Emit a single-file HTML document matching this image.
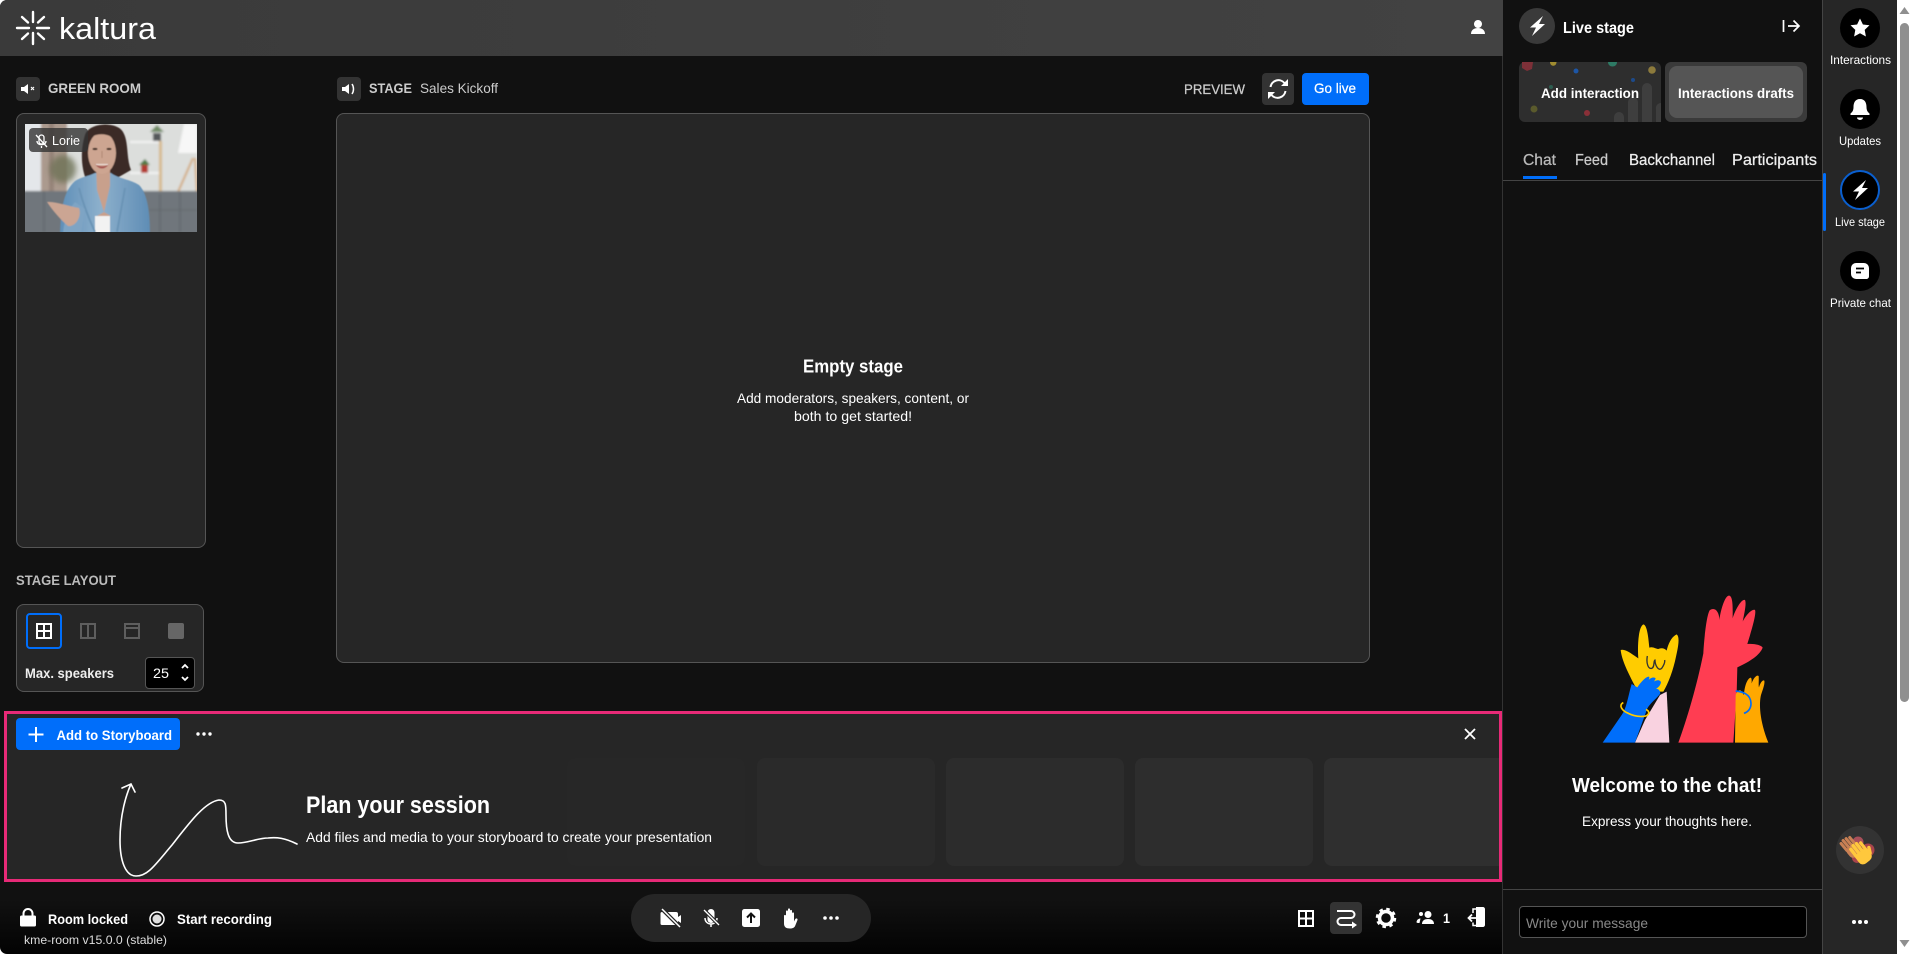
<!DOCTYPE html>
<html><head><meta charset="utf-8"><title>Kaltura room</title>
<style>
html,body{margin:0;padding:0;width:1912px;height:954px;overflow:hidden;background:#fff}
div{position:absolute;box-sizing:border-box}
svg{position:absolute;left:0;top:0}
text{font-family:"Liberation Sans",sans-serif;fill:#fff;font-size:14px}
.b{font-weight:700}
.m{stroke:currentColor;stroke-width:.25px}
</style></head><body>
<div style="left:0;top:0;width:1503px;height:954px;background:linear-gradient(#111 0,#111 900px,#030303 954px);border-radius:7px 0 0 7px"></div>
<div style="left:0;top:0;width:1503px;height:56px;background:linear-gradient(90deg,#3a3a3a,#424242);border-radius:7px 0 0 0"></div>
<div style="left:1502px;top:56px;width:1px;height:898px;background:#333"></div>
<div style="left:1503px;top:0;width:319px;height:954px;background:#111"></div>
<div style="left:1822px;top:0;width:75px;height:954px;background:#262626;border-left:1px solid #444"></div>
<div style="left:1897px;top:0;width:15px;height:954px;background:#fff"></div>
<div style="left:1900px;top:23px;width:9px;height:679px;background:#8f8f8f;border-radius:5px"></div>

<div style="left:16px;top:113px;width:190px;height:435px;background:#262626;border:1px solid #555;border-radius:8px"></div>
<div style="left:336px;top:113px;width:1034px;height:550px;background:#262626;border:1px solid #555;border-radius:8px"></div>
<div style="left:16px;top:77px;width:24px;height:24px;background:#333;border-radius:4px"></div>
<div style="left:337px;top:77px;width:24px;height:24px;background:#333;border-radius:4px"></div>
<div style="left:1262px;top:73px;width:32px;height:32px;background:#333;border-radius:4px"></div>
<div style="left:1302px;top:73px;width:67px;height:32px;background:#006efa;border-radius:4px"></div>

<div style="left:16px;top:604px;width:188px;height:88px;background:#262626;border:1px solid #555;border-radius:8px"></div>
<div style="left:26px;top:613px;width:36px;height:36px;border:2px solid #006efa;border-radius:4px"></div>
<div style="left:145px;top:657px;width:50px;height:32px;background:#000;border:1px solid #555;border-radius:4px"></div>

<div style="left:4px;top:711px;width:1498px;height:171px;background:#262626;border:3px solid #e72a77"></div>
<div style="left:567px;top:758px;width:178px;height:108px;border-radius:8px;background:#272727"></div>
<div style="left:757px;top:758px;width:178px;height:108px;border-radius:8px;background:#2a2a2a"></div>
<div style="left:946px;top:758px;width:178px;height:108px;border-radius:8px;background:#2c2c2c"></div>
<div style="left:1135px;top:758px;width:178px;height:108px;border-radius:8px;background:#2d2d2d"></div>
<div style="left:1324px;top:758px;width:175px;height:108px;border-radius:8px 0 0 8px;background:#2f2f2f"></div>
<div style="left:16px;top:718px;width:164px;height:32px;background:#006efa;border-radius:4px"></div>

<div style="left:631px;top:894px;width:240px;height:48px;background:#262626;border-radius:24px"></div>
<div style="left:1330px;top:902px;width:32px;height:32px;background:#333;border-radius:4px"></div>

<div style="left:1519px;top:62px;width:142px;height:60px;background:#2e2e2e;border-radius:6px"></div>
<div style="left:1665px;top:62px;width:142px;height:60px;background:#3a3a3a;border-radius:6px"></div>
<div style="left:1669px;top:66px;width:134px;height:52px;background:#555;border-radius:8px"></div>
<div style="left:1503px;top:180px;width:319px;height:1px;background:#444"></div>
<div style="left:1523px;top:176px;width:34px;height:3px;background:#006efa"></div>
<div style="left:1503px;top:889px;width:319px;height:1px;background:#444"></div>
<div style="left:1519px;top:906px;width:288px;height:32px;background:#000;border:1px solid #555;border-radius:4px"></div>
<div style="left:1823px;top:173px;width:3px;height:58px;background:#006efa;border-radius:2px"></div>

<!-- video tile -->
<svg style="left:25px;top:124px" width="172" height="108" viewBox="0 0 172 108">
<defs>
<filter id="bl" x="-5%" y="-5%" width="110%" height="110%"><feGaussianBlur stdDeviation="1"/></filter>
<filter id="bl3" x="-30%" y="-30%" width="160%" height="160%"><feGaussianBlur stdDeviation="3"/></filter>
<filter id="bl05"><feGaussianBlur stdDeviation=".5"/></filter>
<clipPath id="vc"><rect width="172" height="108"/></clipPath>
<linearGradient id="sh" x1="0" x2="1" y1="0" y2="0"><stop offset="0" stop-color="#5f8fb8"/><stop offset=".45" stop-color="#8db0cc"/><stop offset="1" stop-color="#5f8db5"/></linearGradient>
</defs>
<g clip-path="url(#vc)">
<g filter="url(#bl)">
<rect x="-4" y="-4" width="180" height="116" fill="#dcdedc"/>
<rect x="-4" y="-4" width="20" height="74" fill="#e4e7ea"/>
<rect x="16" y="-4" width="26" height="76" fill="#ab9a8e"/>
<rect x="24" y="-4" width="5" height="76" fill="#97857a"/>
<rect x="105" y="17" width="32" height="2" fill="#f4f4f4"/><rect x="105" y="48" width="32" height="2" fill="#f4f4f4"/>
<rect x="134" y="17" width="3" height="52" fill="#d7b98c"/>
<rect x="128" y="9" width="8" height="8" fill="#55585a"/><path d="M125 8L132 1L139 8Z" fill="#6f8a65"/>
<rect x="116" y="41" width="7" height="8" fill="#b33b30"/><path d="M114 41L120 35L125 41Z" fill="#4f7a45"/>
<path d="M159 0H172V29H153Z" fill="#f7f7f7"/>
<path d="M168 34L153 68M170 34L172 68" stroke="#d3a878" stroke-width="2" fill="none"/>
<rect x="-4" y="67" width="180" height="45" fill="#70767c"/>
<path d="M19 67V108M135 70V108M155 68V108" stroke="#62676c" stroke-width="1.500"/>
<path d="M124 86H172" stroke="#62676c" stroke-width="1"/>
</g>
<ellipse cx="38" cy="45" rx="13" ry="14" fill="#6d7154" filter="url(#bl3)" opacity=".8"/>
<g filter="url(#bl05)">
<path d="M60 11C64-2 92-3 98 8C104 18 101 34 106 46L92 54L62 58C55 42 56 24 60 11Z" fill="#3b2a25"/>
<path d="M35 110C36 85 38 68 50 57C56 53 64 52 70 49L86 49C92 54 104 55 114 61C123 70 125 90 125 110Z" fill="url(#sh)"/>
<path d="M71 42H85V62L79 88L72 66Z" fill="#c8a08c"/>
<path d="M70 92H85V110H70Z" fill="#f2f2f2"/>
<path d="M79 88L72 92H86Z" fill="#c8a08c"/>
<ellipse cx="77" cy="29" rx="14" ry="21" fill="#cda591"/>
<path d="M64 15C70 8 88 8 92 20C94 12 90 4 78 4C68 4 63 9 64 15Z" fill="#3b2a25"/>
<ellipse cx="70" cy="25" rx="2.500" ry="1.100" fill="#3d2a24"/><ellipse cx="84" cy="25" rx="2.500" ry="1.100" fill="#3d2a24"/>
<path d="M70 40C74 43 80 43 84 40C80 46 74 46 70 40Z" fill="#a55350"/>
<path d="M71 40.500h12" stroke="#efe3de" stroke-width="1"/>
<path d="M77 27v7" stroke="#b08672" stroke-width="1"/>
<path d="M54 64C58 80 64 95 70 108M100 64L92 108" stroke="#6b94b6" stroke-width="2" fill="none"/>
<path d="M38 110C39 95 44 85 50 78L60 85L56 110Z" fill="#7ea4c4"/>
<path d="M22 78C30 77 42 82 54 84C57 92 51 103 43 102C35 95 28 87 22 78Z" fill="#cba593"/>
</g>
</g>
<rect x="4" y="4" width="59" height="24" rx="4" fill="#333" fill-opacity=".8"/>
</svg>

<svg width="1912" height="954" viewBox="0 0 1912 954" xmlns="http://www.w3.org/2000/svg">
<!-- logo -->
<g stroke="#fff" stroke-width="2.400" stroke-linecap="round" fill="none">
<path d="M33 12V22M33 33V44M17 28H29M37 28H49M22 17L28 22.500M44 17L38 22.500M22 39L28 33.500M44 39L38 33.500"/>
</g>
<text x="59" y="39" textLength="97" lengthAdjust="spacingAndGlyphs" style="font-size:31px">kaltura</text>
<!-- user -->
<path d="M1478 20a4 4 0 1 1-.01 0ZM1471 34c0-4 3-6 7-6s7 2 7 6Z" fill="#fff"/>

<!-- speakers -->
<path d="M21 87h3l4-3v10l-4-3h-3Z" fill="#fff"/><path d="M31 87l3 3M34 87l-3 3" stroke="#fff" stroke-width="1.200"/>
<path d="M342 87h3l4-3v10l-4-3h-3Z" fill="#fff"/><path d="M352 84c2 3 2 7 0 10" stroke="#fff" stroke-width="1.500" fill="none"/>
<text class="b" x="48" y="93" textLength="93" lengthAdjust="spacingAndGlyphs" style="fill:#ccc">GREEN ROOM</text>
<text class="b" x="369" y="93" textLength="43" lengthAdjust="spacingAndGlyphs" style="fill:#ccc">STAGE</text>
<text x="420" y="93" textLength="78" lengthAdjust="spacingAndGlyphs" style="fill:#ccc">Sales Kickoff</text>

<!-- lorie label -->
<g stroke="#fff" stroke-width="1.300" fill="none"><rect x="39" y="135" width="5" height="9" rx="2.500"/><path d="M37 141c0 5 9 5 9 0M41.500 146v2M36 135l11 12"/></g>
<text x="52" y="145" textLength="28" lengthAdjust="spacingAndGlyphs" style="font-size:13px">Lorie</text>

<text class="m" x="1184" y="94" textLength="61" lengthAdjust="spacingAndGlyphs" style="fill:#ccc;color:#ccc">PREVIEW</text>
<g stroke="#fff" stroke-width="2" fill="none"><path d="M1270.500 87a8 8 0 0 1 14-4"/><path d="M1285.500 91a8 8 0 0 1-14 4"/></g>
<path d="M1288 79v7h-7ZM1268 99v-7h7Z" fill="#fff"/>
<text class="m" x="1314" y="93" textLength="42" lengthAdjust="spacingAndGlyphs" style="color:#fff">Go live</text>

<text class="b" x="803" y="372.500" textLength="100" lengthAdjust="spacingAndGlyphs" style="font-size:18px">Empty stage</text>
<text x="737" y="403" textLength="232" lengthAdjust="spacingAndGlyphs">Add moderators, speakers, content, or</text>
<text x="794" y="421" textLength="118" lengthAdjust="spacingAndGlyphs">both to get started!</text>

<text class="b" x="16" y="585" textLength="100" lengthAdjust="spacingAndGlyphs" style="fill:#bbb">STAGE LAYOUT</text>
<!-- layouts -->
<g fill="none" stroke-width="2">
<path d="M37 624h14v14h-14ZM44 624v14M37 631h14" stroke="#fff"/>
<path d="M81 624h14v14h-14ZM88 624v14" stroke="#5e5e5e"/>
<path d="M125 624h14v14h-14ZM125 628h14" stroke="#5e5e5e"/>
</g>
<rect x="168" y="623" width="16" height="16" rx="2" fill="#666"/>
<text class="b" x="25" y="678" textLength="89" lengthAdjust="spacingAndGlyphs" style="fill:#eee">Max. speakers</text>
<text x="153" y="678" textLength="16" lengthAdjust="spacingAndGlyphs">25</text>
<path d="M182 668l3-3 3 3M182 677l3 3 3-3" stroke="#fff" stroke-width="1.800" fill="none"/>

<!-- storyboard -->
<path d="M36 727v15M28.500 734.500h15" stroke="#fff" stroke-width="2" fill="none"/>
<text class="b" x="56.500" y="740" textLength="115.500" lengthAdjust="spacingAndGlyphs">Add to Storyboard</text>
<g fill="#fff"><circle cx="198" cy="734" r="1.700"/><circle cx="204" cy="734" r="1.700"/><circle cx="210" cy="734" r="1.700"/></g>
<path d="M1465 729l10 10M1475 729l-10 10" stroke="#fff" stroke-width="1.800" fill="none"/>
<path d="M297 844C285 838 277 837 268 838C258 838 248 843 238 843C228 843 226 830 226 815C226 805 226 800 219 800C205 802 190 822 172 845C155 865 148 876 136 876C125 876 120 860 120 840C120 815 126 795 131 784M122 788L131 784L135 792" stroke="#fff" stroke-width="1.600" fill="none" stroke-linecap="round"/>
<text class="b" x="306" y="813" textLength="184" lengthAdjust="spacingAndGlyphs" style="font-size:24px">Plan your session</text>
<text x="306" y="842" textLength="406" lengthAdjust="spacingAndGlyphs">Add files and media to your storyboard to create your presentation</text>

<!-- bottom left -->
<path d="M20 917a1.500 1.500 0 0 1 1.500-1.500h13a1.500 1.500 0 0 1 1.500 1.500v8a1.500 1.500 0 0 1-1.500 1.500h-13a1.500 1.500 0 0 1-1.500-1.500Z" fill="#fff"/>
<path d="M23.500 916v-2.500a4.500 4.500 0 0 1 9 0V916" stroke="#fff" stroke-width="2" fill="none"/>
<text class="b" x="48" y="924" textLength="80" lengthAdjust="spacingAndGlyphs">Room locked</text>
<circle cx="157" cy="919" r="7" stroke="#fff" stroke-width="1.500" fill="none"/><circle cx="157" cy="919" r="4.500" fill="#ddd"/>
<text class="b" x="177" y="924" textLength="95" lengthAdjust="spacingAndGlyphs">Start recording</text>
<text x="24" y="944" textLength="143" lengthAdjust="spacingAndGlyphs" style="font-size:12px;fill:#ddd">kme-room v15.0.0 (stable)</text>

<!-- control pill -->
<path d="M662 912h14a2 2 0 0 1 2 2v9a2 2 0 0 1-2 2h-14a1.500 1.500 0 0 1-1.500-1.500v-10a1.500 1.500 0 0 1 1.500-1.500ZM678 917l3-2v8l-3-2Z" fill="#fff"/>
<path d="M662 909l18 18" stroke="#262626" stroke-width="4"/><path d="M662 909l18 18" stroke="#fff" stroke-width="1.500"/>
<rect x="707.500" y="909" width="7" height="14" rx="3.500" fill="#fff"/>
<path d="M705 918c0 8 12 8 12 0M711 924v3" stroke="#fff" stroke-width="1.500" fill="none"/>
<path d="M704 910l15 15" stroke="#262626" stroke-width="3.500"/><path d="M704 910l15 15" stroke="#fff" stroke-width="1.300"/>
<rect x="742" y="909" width="18" height="18" rx="2.500" fill="#fff"/>
<path d="M751 923v-9M747 917.500l4-4 4 4" stroke="#111" stroke-width="2" fill="none"/>
<path d="M784 916c0-1.500 2-1.500 2 0v-4.500c0-1.500 2-1.500 2 0v-2c0-1.500 2-1.500 2 0v1.500c0-1.500 2-1.500 2 0v2.500c0-1.500 2-1.500 2 0v8l1-2c1-2 3-1 2.500.5l-2 5c-1 3-3 3.500-5.500 3.500c-4 0-6-1.500-6-5Z" fill="#fff"/>
<g fill="#fff"><circle cx="825" cy="918" r="1.800"/><circle cx="831" cy="918" r="1.800"/><circle cx="837" cy="918" r="1.800"/></g>

<!-- bottom right -->
<path d="M1299 911h14v15h-14ZM1306 911v15M1299 918.500h14" stroke="#fff" stroke-width="2" fill="none"/>
<path d="M1337 911h14a3.500 3.500 0 0 1 0 7h-10a3.500 3.500 0 0 0 0 7h12" stroke="#fff" stroke-width="2" fill="none"/>
<path d="M1352 921.500l5 3.500-5 3.500Z" fill="#fff"/>
<circle cx="1386" cy="918" r="6.500" stroke="#fff" stroke-width="3.500" fill="none"/>
<circle cx="1386" cy="918" r="9" stroke="#fff" stroke-width="2.500" fill="none" stroke-dasharray="3.500 3.570"/>
<circle cx="1428" cy="914.500" r="3.500" fill="#fff"/><path d="M1422 924c0-3.500 2.500-5 6-5s6 1.500 6 5Z" fill="#fff"/>
<circle cx="1421" cy="914" r="2" fill="#fff"/><path d="M1419.500 923c-1.500 0-3 0-3-1c.5-2.500 2-3.500 4-3.500Z" fill="#fff"/>
<text class="b" x="1443" y="923" textLength="7" lengthAdjust="spacingAndGlyphs" style="fill:#fff">1</text>
<path d="M1476 907h7c1 0 2 1 2 2v16c0 1-1 2-2 2h-7Z" fill="#fff"/>
<path d="M1478 909h-5v4M1478 925.500h-5v-3" stroke="#fff" stroke-width="1.500" fill="none"/>
<path d="M1469 918h9M1472 914.500l-3.500 3.500 3.500 3.500" stroke="#fff" stroke-width="1.800" fill="none"/>

<!-- right panel head -->
<circle cx="1537" cy="26" r="18" fill="#3a3a3a"/>
<path d="M1543 16L1530 27.500h6L1532 36L1545 24h-6Z" fill="#fff"/>
<text class="b" x="1563" y="33" textLength="71" lengthAdjust="spacingAndGlyphs" style="font-size:16px">Live stage</text>
<path d="M1783.500 20v12M1788 26h11M1793.500 20.500l5.500 5.500-5.500 5.500" stroke="#fff" stroke-width="1.700" fill="none"/>

<!-- add interaction decoration -->
<g>
<path d="M1522 62h11l-1 7-5 2-5-3Z" fill="#7d3038"/><path d="M1550 62h6.500c0 5-6.500 5-6.500 0Z" fill="#a08c30"/>
<circle cx="1576" cy="71" r="2.500" fill="#1d56a6"/><path d="M1608 62h9c0 6-9 6-9 0Z" fill="#2e7a65"/>
<circle cx="1652" cy="70" r="3.800" fill="#8c7a3c"/><circle cx="1633" cy="80" r="2" fill="#1d4a8a"/>
<circle cx="1551" cy="87" r="2" fill="#2d5d50"/><circle cx="1534" cy="109" r="3.500" fill="#5a5a2c"/>
<circle cx="1587" cy="113" r="3" fill="#8a3038"/>
<path d="M1614 122v-5a5 5 0 0 1 10 0v5ZM1628 122v-20a5 5 0 0 1 10 0v20ZM1642 122v-34a5 5 0 0 1 10 0v34ZM1656 122v-13a5 5 0 0 1 5-6v19Z" fill="#3e3e3e"/>
</g>
<text class="b" x="1541" y="98" textLength="98" lengthAdjust="spacingAndGlyphs">Add interaction</text>
<text class="b" x="1678" y="98" textLength="116" lengthAdjust="spacingAndGlyphs">Interactions drafts</text>

<text class="m" x="1523" y="165" textLength="33" lengthAdjust="spacingAndGlyphs" style="font-size:16px;fill:#bbb;color:#bbb">Chat</text>
<text class="m" x="1575" y="165" textLength="33" lengthAdjust="spacingAndGlyphs" style="font-size:16px;fill:#ccc;color:#ccc">Feed</text>
<text class="m" x="1629" y="165" textLength="86" lengthAdjust="spacingAndGlyphs" style="font-size:16px;fill:#eee;color:#eee">Backchannel</text>
<text class="m" x="1732" y="165" textLength="85" lengthAdjust="spacingAndGlyphs" style="font-size:16px;fill:#eee;color:#eee">Participants</text>

<!-- hands -->
<g transform="translate(1560 580) scale(.33333)">
<path d="M225 318C205 280 185 240 182 210C195 205 220 225 235 235C232 200 235 140 250 133C262 135 265 175 268 203C280 198 290 210 298 206C305 203 315 205 320 212C325 190 335 170 350 163C360 170 355 200 348 230C340 270 325 310 310 335L240 335Z" fill="#ffcc00"/>
<path d="M262 228C258 250 265 268 275 265C285 262 280 240 285 240C285 255 295 275 305 265C312 255 315 245 314 240" stroke="#333" stroke-width="4" fill="none"/>
<path d="M255 420L300 345L320 335L328 488L225 488Z" fill="#f9d2e0"/>
<path d="M128 488L185 405C200 385 205 345 215 312L232 322C240 310 255 292 265 290C270 290 268 296 266 300C272 292 285 290 287 296L282 305C290 298 303 300 303 308C300 320 290 325 288 327C295 325 303 335 300 342C290 355 270 370 262 385L225 488Z" fill="#006efa"/>
<path d="M190 368C175 375 185 392 205 400C225 410 262 415 266 400C268 395 262 390 258 388" stroke="#ffcc00" stroke-width="5" fill="none"/>
<path d="M355 488C380 420 410 320 430 220C432 180 440 100 450 90C465 80 478 95 478 120C482 90 495 45 508 47C520 50 518 90 518 115C525 90 545 55 555 60C560 70 553 100 548 125C555 110 575 85 585 90C590 100 575 150 562 192C580 190 605 195 608 203C600 225 570 245 532 262L530 340L520 488Z" fill="#ff3d52"/>
<path d="M525 488L527 345C530 335 540 325 545 335L552 345C553 320 562 295 572 293C576 295 575 305 575 310C580 295 590 283 596 288C597 300 595 318 597 322C600 310 608 298 613 302C615 310 610 325 603 345C597 370 598 420 625 488Z" fill="#ffa800"/>
<path d="M527 333C545 335 572 340 573 370C573 385 565 395 552 400" stroke="#006efa" stroke-width="5" fill="none"/>
</g>
<text class="b" x="1572" y="792" textLength="190" lengthAdjust="spacingAndGlyphs" style="font-size:20px">Welcome to the chat!</text>
<text x="1582" y="826" textLength="170" lengthAdjust="spacingAndGlyphs">Express your thoughts here.</text>
<text x="1526" y="928" textLength="122" lengthAdjust="spacingAndGlyphs" style="fill:#888">Write your message</text>

<!-- sidebar -->
<circle cx="1860" cy="28" r="20" fill="#000"/>
<path d="M1860 18.500l2.900 6 6.600.8-4.800 4.600 1.200 6.600-5.900-3.200-5.900 3.200 1.200-6.600-4.800-4.600 6.600-.8Z" fill="#fff"/>
<text x="1830" y="64" textLength="61" lengthAdjust="spacingAndGlyphs" style="font-size:12px">Interactions</text>
<circle cx="1860" cy="109" r="20" fill="#000"/>
<path d="M1860 99c-5 0-6.500 4-6.500 8c0 3-1 5-3 6.500v1.500h19v-1.500c-2-1.500-3-3.500-3-6.500c0-4-1.500-8-6.500-8Z" fill="#fff"/><path d="M1857 117.500a3 2.500 0 0 0 6 0Z" fill="#fff"/>
<text x="1839" y="145" textLength="42" lengthAdjust="spacingAndGlyphs" style="font-size:12px">Updates</text>
<circle cx="1860" cy="190" r="19" fill="#000" stroke="#0a5fcf" stroke-width="2"/>
<path d="M1866 180L1853 191.500h6L1855 200L1868 188h-6Z" fill="#fff"/>
<text x="1835" y="226" textLength="50" lengthAdjust="spacingAndGlyphs" style="font-size:12px">Live stage</text>
<circle cx="1860" cy="271" r="20" fill="#000"/>
<path d="M1856 263h8a5 5 0 0 1 5 5v8a3 3 0 0 1-2 3h-11a5 5 0 0 1-5-5v-6a5 5 0 0 1 5-5Z" fill="#fff"/>
<path d="M1856 268.500h8M1856 272.500h5" stroke="#000" stroke-width="1.800"/>
<text x="1830" y="307" textLength="61" lengthAdjust="spacingAndGlyphs" style="font-size:12px">Private chat</text>

<circle cx="1860" cy="850" r="24" fill="#333"/>
<!-- clap -->
<circle cx="1868" cy="850" r="6.500" fill="#a8444c"/><circle cx="1857" cy="858" r="5" fill="#a8444c"/><circle cx="1858" cy="842" r="5.500" fill="#a8505a"/>
<g transform="rotate(-40 1852 848)" fill="#c98054">
<rect x="1845" y="845" width="14" height="12" rx="4"/>
<rect x="1845" y="836" width="3" height="12" rx="1.500"/><rect x="1848.500" y="835" width="3" height="12" rx="1.500"/><rect x="1852" y="835.500" width="3" height="12" rx="1.500"/><rect x="1855.500" y="837" width="3" height="12" rx="1.500"/>
</g>
<g transform="rotate(-38 1862 855)" fill="#ffc83d">
<rect x="1855" y="851" width="15" height="13" rx="5"/>
<rect x="1855" y="842" width="3.400" height="14" rx="1.700"/><rect x="1859" y="840.500" width="3.400" height="14" rx="1.700"/><rect x="1863" y="841" width="3.400" height="14" rx="1.700"/><rect x="1866.800" y="843" width="3.200" height="13" rx="1.600"/>
<rect x="1869" y="851" width="3.400" height="9" rx="1.700" transform="rotate(25 1870 856)"/>
</g>
<g fill="#fff"><circle cx="1854" cy="922" r="2"/><circle cx="1860" cy="922" r="2"/><circle cx="1866" cy="922" r="2"/></g>

<!-- scrollbar arrows -->
<path d="M1904.500 7l-5 7h10Z" fill="#8f8f8f"/>
<path d="M1904.500 947l-5-7h10Z" fill="#8f8f8f"/>
</svg>
</body></html>
